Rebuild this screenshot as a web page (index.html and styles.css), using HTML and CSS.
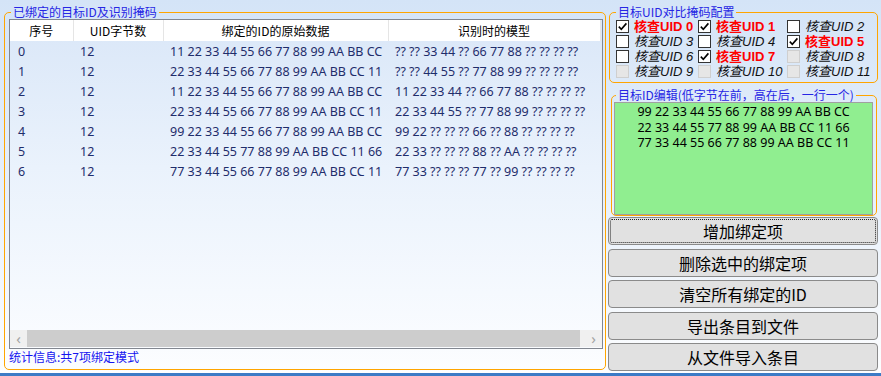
FILE: index.html
```html
<!DOCTYPE html>
<html lang="zh-CN">
<head>
<meta charset="utf-8">
<title>绑定目标ID</title>
<link rel="stylesheet" href="styles.css">
</head>
<body>
<div class="window">
  <fieldset class="group group-main">
    <legend>已绑定的目标ID及识别掩码</legend>
    <div class="listview">
      <div class="lv-body">
        <table class="lv-table">
          <colgroup>
            <col class="c1"><col class="c2"><col class="c3"><col class="c4">
          </colgroup>
          <thead>
            <tr><th>序号</th><th>UID字节数</th><th>绑定的ID的原始数据</th><th>识别时的模型</th></tr>
          </thead>
          <tbody>
            <tr><td>0</td><td>12</td><td>11 22 33 44 55 66 77 88 99 AA BB CC</td><td>?? ?? 33 44 ?? 66 77 88 ?? ?? ?? ??</td></tr>
            <tr><td>1</td><td>12</td><td>22 33 44 55 66 77 88 99 AA BB CC 11</td><td>?? ?? 44 55 ?? 77 88 99 ?? ?? ?? ??</td></tr>
            <tr><td>2</td><td>12</td><td>11 22 33 44 55 66 77 88 99 AA BB CC</td><td>11 22 33 44 ?? 66 77 88 ?? ?? ?? ??</td></tr>
            <tr><td>3</td><td>12</td><td>22 33 44 55 66 77 88 99 AA BB CC 11</td><td>22 33 44 55 ?? 77 88 99 ?? ?? ?? ??</td></tr>
            <tr><td>4</td><td>12</td><td>99 22 33 44 55 66 77 88 99 AA BB CC</td><td>99 22 ?? ?? ?? 66 ?? 88 ?? ?? ?? ??</td></tr>
            <tr><td>5</td><td>12</td><td>22 33 44 55 77 88 99 AA BB CC 11 66</td><td>22 33 ?? ?? ?? 88 ?? AA ?? ?? ?? ??</td></tr>
            <tr><td>6</td><td>12</td><td>77 33 44 55 66 77 88 99 AA BB CC 11</td><td>77 33 ?? ?? ?? 77 ?? 99 ?? ?? ?? ??</td></tr>
          </tbody>
        </table>
      </div>
      <div class="hscroll">
        <span class="arrow">&#8249;</span>
        <span class="thumb"></span>
        <span class="track"></span>
        <span class="arrow">&#8250;</span>
      </div>
    </div>
    <div class="status">统计信息:共7项绑定模式</div>
  </fieldset>

  <div class="side">
    <fieldset class="group group-mask">
      <legend>目标UID对比掩码配置</legend>
      <div class="checks">
        <label class="check on"><span class="box"><svg viewBox="0 0 11 11" width="11" height="11"><path d="M1.8 5.6 L4.3 8.2 L9.4 2.4" /></svg></span><span class="label">核查UID 0</span></label>
        <label class="check on"><span class="box"><svg viewBox="0 0 11 11" width="11" height="11"><path d="M1.8 5.6 L4.3 8.2 L9.4 2.4" /></svg></span><span class="label">核查UID 1</span></label>
        <label class="check"><span class="box"></span><span class="label">核查UID 2</span></label>
        <label class="check"><span class="box"></span><span class="label">核查UID 3</span></label>
        <label class="check"><span class="box"></span><span class="label">核查UID 4</span></label>
        <label class="check on"><span class="box"><svg viewBox="0 0 11 11" width="11" height="11"><path d="M1.8 5.6 L4.3 8.2 L9.4 2.4" /></svg></span><span class="label">核查UID 5</span></label>
        <label class="check"><span class="box"></span><span class="label">核查UID 6</span></label>
        <label class="check on"><span class="box"><svg viewBox="0 0 11 11" width="11" height="11"><path d="M1.8 5.6 L4.3 8.2 L9.4 2.4" /></svg></span><span class="label">核查UID 7</span></label>
        <label class="check disabled"><span class="box"></span><span class="label">核查UID 8</span></label>
        <label class="check disabled"><span class="box"></span><span class="label">核查UID 9</span></label>
        <label class="check disabled"><span class="box"></span><span class="label">核查UID 10</span></label>
        <label class="check disabled"><span class="box"></span><span class="label">核查UID 11</span></label>
      </div>
    </fieldset>

    <fieldset class="group group-edit">
      <legend>目标ID编辑(低字节在前，高在后，一行一个)</legend>
      <div class="editor">
        <div>99 22 33 44 55 66 77 88 99 AA BB CC</div>
        <div>22 33 44 55 77 88 99 AA BB CC 11 66</div>
        <div>77 33 44 55 66 77 88 99 AA BB CC 11</div>
      </div>
    </fieldset>

    <div class="buttons">
      <button class="btn focus">增加绑定项</button>
      <button class="btn">删除选中的绑定项</button>
      <button class="btn">清空所有绑定的ID</button>
      <button class="btn">导出条目到文件</button>
      <button class="btn">从文件导入条目</button>
    </div>
  </div>
</div>
<div class="taskbar"></div>
</body>
</html>
```

FILE: styles.css
```css
html, body {
  margin: 0;
  padding: 0;
}

body {
  width: 881px;
  height: 376px;
  overflow: hidden;
  background: linear-gradient(to bottom, #d4e4f7 0%, #e9f1fb 55%, #fdfeff 100%);
  font-family: "Noto Sans", "Noto Sans CJK SC", sans-serif;
  color: #000;
}

.window {
  display: flex;
  align-items: flex-start;
  height: 373px;
  box-sizing: border-box;
  padding: 5px 0 0 4px;
}

.taskbar {
  height: 3px;
  background: #3c7bc6;
}

/* group boxes */
.group {
  margin: 0;
  border: 1px solid #ffa500;
  border-radius: 5px;
  box-sizing: border-box;
  min-inline-size: 0;
}

.group legend {
  font-family: "Noto Sans CJK SC", sans-serif;
  font-size: 12px;
  line-height: 14px;
  color: #2626e4;
  padding: 0 2px;
  margin-left: 2px;
  white-space: nowrap;
}

.group-main {
  width: 602px;
  height: 365px;
  padding: 0 2px 0 4px;
}

/* list view */
.listview {
  width: 594px;
  height: 330px;
  box-sizing: border-box;
  border: 1px solid #828790;
  display: flex;
  flex-direction: column;
  background: linear-gradient(to bottom, #dae7f8 0%, #eaf2fc 45%, #fafcff 100%);
}

.lv-body {
  flex: 1;
  overflow: hidden;
}

.lv-table {
  table-layout: fixed;
  border-collapse: collapse;
  width: 590px;
}

.lv-table .c1 { width: 63px; }
.lv-table .c2 { width: 90px; }
.lv-table .c3 { width: 225px; }
.lv-table .c4 { width: 212px; }

.lv-table th {
  height: 21px;
  padding: 0;
  background: #fff;
  border-right: 1px solid #e5e5e5;
  font-family: "Noto Sans CJK SC", sans-serif;
  font-weight: normal;
  font-size: 12px;
  color: #000;
  text-align: center;
  white-space: nowrap;
}

.lv-table td {
  height: 20px;
  padding: 0 0 0 7px;
  font-size: 12.5px;
  color: #1f2d6b;
  white-space: nowrap;
  overflow: hidden;
}

.lv-table td:first-child {
  padding-left: 8px;
}

.hscroll {
  height: 17px;
  display: flex;
  background: #f0f0f0;
  margin-bottom: 1px;
}

.hscroll .arrow {
  width: 17px;
  display: flex;
  align-items: center;
  justify-content: center;
  color: #a3a3a3;
  font-size: 15px;
  line-height: 17px;
}

.hscroll .thumb {
  width: 553px;
  background: #cdcdcd;
}

.hscroll .track {
  flex: 1;
}

.status {
  margin-top: 1px;
  font-family: "Noto Sans CJK SC", sans-serif;
  font-size: 12px;
  line-height: 14px;
  color: #1414f0;
}

/* right side */
.side {
  width: 270px;
  margin-left: 2px;
  display: flex;
  flex-direction: column;
}

.group-mask {
  width: 269px;
  height: 78px;
  margin-left: 1px;
  padding: 0 4px 0 6px;
}

.group-mask legend {
  margin-left: 0;
}

.checks {
  display: grid;
  grid-template-columns: 82px 89px 1fr;
  grid-auto-rows: 15px;
}

.check {
  display: flex;
  align-items: center;
  gap: 5px;
  font-size: 13px;
  line-height: 15px;
  white-space: nowrap;
  min-width: 0;
}

.box {
  width: 13px;
  height: 13px;
  box-sizing: border-box;
  border: 1px solid #333;
  background: #fff;
  flex: none;
  display: flex;
}

.box svg path {
  fill: none;
  stroke: #000;
  stroke-width: 1.6;
}

.check.disabled .box {
  background: #e6e6e6;
  border-color: #cfcfcf;
}

.label {
  font-family: "Liberation Sans", "Noto Sans CJK SC", sans-serif;
  font-style: italic;
  color: #111;
}

.check.on .label {
  font-style: normal;
  font-weight: bold;
  color: #ff0000;
}

.group-edit {
  width: 266px;
  height: 128px;
  margin: 5px 0 0 3px;
  padding: 0 3px 1px 2px;
}

.editor {
  height: 113px;
  box-sizing: border-box;
  border: 1px solid #a0a0a0;
  background: #90ee90;
  padding-top: 1px;
  font-size: 12.5px;
  line-height: 15.5px;
  text-align: center;
  color: #000;
}

.buttons {
  display: flex;
  flex-direction: column;
  gap: 3.5px;
  margin-top: 1px;
}

.btn {
  height: 28px;
  margin: 0;
  padding: 0;
  box-sizing: border-box;
  border: 1px solid #8a8a8a;
  border-radius: 4px;
  background: #e1e1e1;
  font-family: "Noto Sans CJK SC", sans-serif;
  font-size: 16px;
  line-height: 20px;
  color: #000;
  text-align: center;
}

.btn.focus {
  outline: 1px dotted #222;
  outline-offset: -3px;
}
```
